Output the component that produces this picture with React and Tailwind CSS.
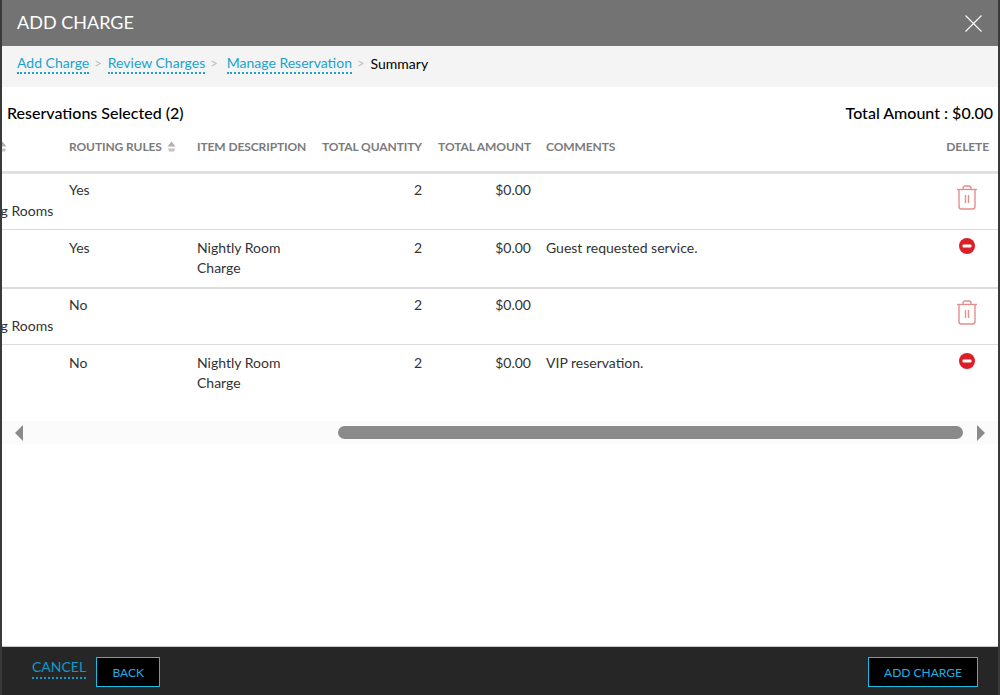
import React from "react";

const cols = "grid grid-cols-[119px_128px_125px_116px_109px_1fr_67px]";

const SortIcon = () => (
  <svg width="9" height="11" viewBox="0 0 9 11" className="inline-block ml-[5px] -mt-[1px] align-middle">
    <path d="M4.5 0.5L8.5 5.5H0.5Z" fill="#b0b0b0" />
    <path d="M1 7.5H8L7 10.5H2Z" fill="#c4c4c4" />
  </svg>
);

const TrashIcon = () => (
  <svg width="22" height="25" viewBox="0 0 22 25" fill="none" stroke="#e48f8f" strokeWidth="1.4">
    <path d="M1 4.5H21" />
    <path d="M7 4.5V3C7 1.6 8 1 9 1H13C14 1 15 1.6 15 3V4.5" />
    <path d="M3 4.5V21.5C3 23 4 24 5.5 24H16.5C18 24 19 23 19 21.5V4.5" />
    <path d="M9.5 10V18M12.5 10V18" />
  </svg>
);

const MinusIcon = () => (
  <svg width="16" height="16" viewBox="0 0 16 16">
    <circle cx="8" cy="8" r="8" fill="#dc1f26" />
    <rect x="3.5" y="6.5" width="9" height="3" rx="1" fill="#fff" />
  </svg>
);

const Header = () => (
  <div className={`${cols} h-[44px] items-center border-b-[3px] border-[#e0e0e0] pb-[8px] text-[12px] font-bold uppercase tracking-[-0.1px] text-[#7b7b7b]`}>
    <div className="text-right pr-[54px]">
      <SortIcon />
    </div>
    <div className="pl-2">
      Routing Rules
      <SortIcon />
    </div>
    <div className="pl-2">Item Description</div>
    <div className="pr-2 text-right">Total Quantity</div>
    <div className="pr-2 text-right">Total Amount</div>
    <div className="pl-[7px]">Comments</div>
    <div className="pr-[9px] text-right">Delete</div>
  </div>
);

const ParentRow = ({ routing }) => (
  <div className={`${cols} h-[56px] pt-[6px] text-[14px] leading-5 text-[#333] border-b border-[#dcdcdc]`}>
    <div className="pt-[21px] pl-[14px] whitespace-nowrap">Sleeping Rooms</div>
    <div className="pl-2">{routing}</div>
    <div />
    <div className="pr-2 text-right">2</div>
    <div className="pr-2 text-right">$0.00</div>
    <div />
    <div className="flex justify-end pr-[20px] pt-[5px]">
      <TrashIcon />
    </div>
  </div>
);

const ChildRow = ({ routing, comment, border }) => (
  <div className={`${cols} h-[59px] pt-[8px] text-[14px] leading-5 text-[#333] ${border}`}>
    <div />
    <div className="pl-2">{routing}</div>
    <div className="pl-2 pr-6">Nightly Room Charge</div>
    <div className="pr-2 text-right">2</div>
    <div className="pr-2 text-right">$0.00</div>
    <div className="pl-[7px]">{comment}</div>
    <div className="flex justify-end pr-[23px]">
      <div>
        <MinusIcon />
      </div>
    </div>
  </div>
);

const Crumb = ({ children }) => (
  <a className="text-[#1ba3cc] border-b-2 border-dotted border-[#1ba3cc] leading-[18px]">{children}</a>
);

const Sep = ({ className }) => <span className={`text-[#bdbdbd] text-[13px] ${className}`}>&gt;</span>;

export default function App() {
  return (
    <div className="w-[1000px] h-[695px] bg-[#3a3a3a] px-[2px] font-['Lato',sans-serif] overflow-hidden">
      <div className="h-full flex flex-col bg-white">
        <div className="h-[46px] bg-[#737373] flex items-center justify-between pl-[15px] pr-[16px] pb-[2px]">
          <h1 className="text-[18px] text-white">ADD CHARGE</h1>
          <svg width="17" height="17" viewBox="0 0 17 17" stroke="#fff" strokeWidth="1.1" className="mt-[3px]">
            <path d="M0.5 0.5L16.5 16.5M16.5 0.5L0.5 16.5" />
          </svg>
        </div>

        <div className="h-[41px] bg-[#f4f4f4] flex items-center pl-[15px] pb-[5px] text-[14px]">
          <Crumb>Add Charge</Crumb>
          <Sep className="ml-[5px] mr-[6px]" />
          <Crumb>Review Charges</Crumb>
          <Sep className="ml-[5px] mr-[9px]" />
          <Crumb>Manage Reservation</Crumb>
          <Sep className="ml-[5px] mr-[6px]" />
          <span className="text-black -mt-[2px]">Summary</span>
        </div>

        <div className="flex-1 overflow-hidden">
          <div className="flex justify-between px-[5px] pt-[16px] h-[43px] text-[16px] leading-5 font-medium text-black">
            <span>Reservations Selected (2)</span>
            <span>Total Amount : $0.00</span>
          </div>

          <div className="-ml-[60px] w-[1056px]">
            <Header />
            <ParentRow routing="Yes" />
            <ChildRow routing="Yes" comment="Guest requested service." border="border-b-2 border-[#dcdcdc]" />
            <ParentRow routing="No" />
            <ChildRow routing="No" comment="VIP reservation." border="" />
          </div>

          <div className="mt-[17px] h-[23px] bg-[#fbfbfb] flex items-center px-[13px]">
            <div className="w-0 h-0 border-y-[8px] border-y-transparent border-r-[8px] border-r-[#8a8a8a]" />
            <div className="flex-1 pl-[315px] pr-[14px]">
              <div className="h-[13px] rounded-full bg-[#8a8a8a]" />
            </div>
            <div className="w-0 h-0 border-y-[8px] border-y-transparent border-l-[8px] border-l-[#8a8a8a]" />
          </div>
        </div>

        <div className="h-[49px] bg-[#262626] border-t border-[#c8c8c8] flex items-center justify-between pl-[30px] pr-[20px] pt-[2px] shrink-0">
          <div className="flex items-center gap-[10px]">
            <a className="text-[14px] leading-[18px] text-[#1399c9] border-b-2 border-dotted border-[#1399c9] pb-[1px] -mt-[7px]">CANCEL</a>
            <button className="h-[30px] w-[64px] bg-black border border-[#1cbbe6] pt-[2px] text-[12px] text-[#22aee0]">BACK</button>
          </div>
          <button className="h-[30px] w-[110px] bg-black border border-[#1cbbe6] pt-[2px] text-[12px] text-[#22aee0]">ADD CHARGE</button>
        </div>
      </div>
    </div>
  );
}
